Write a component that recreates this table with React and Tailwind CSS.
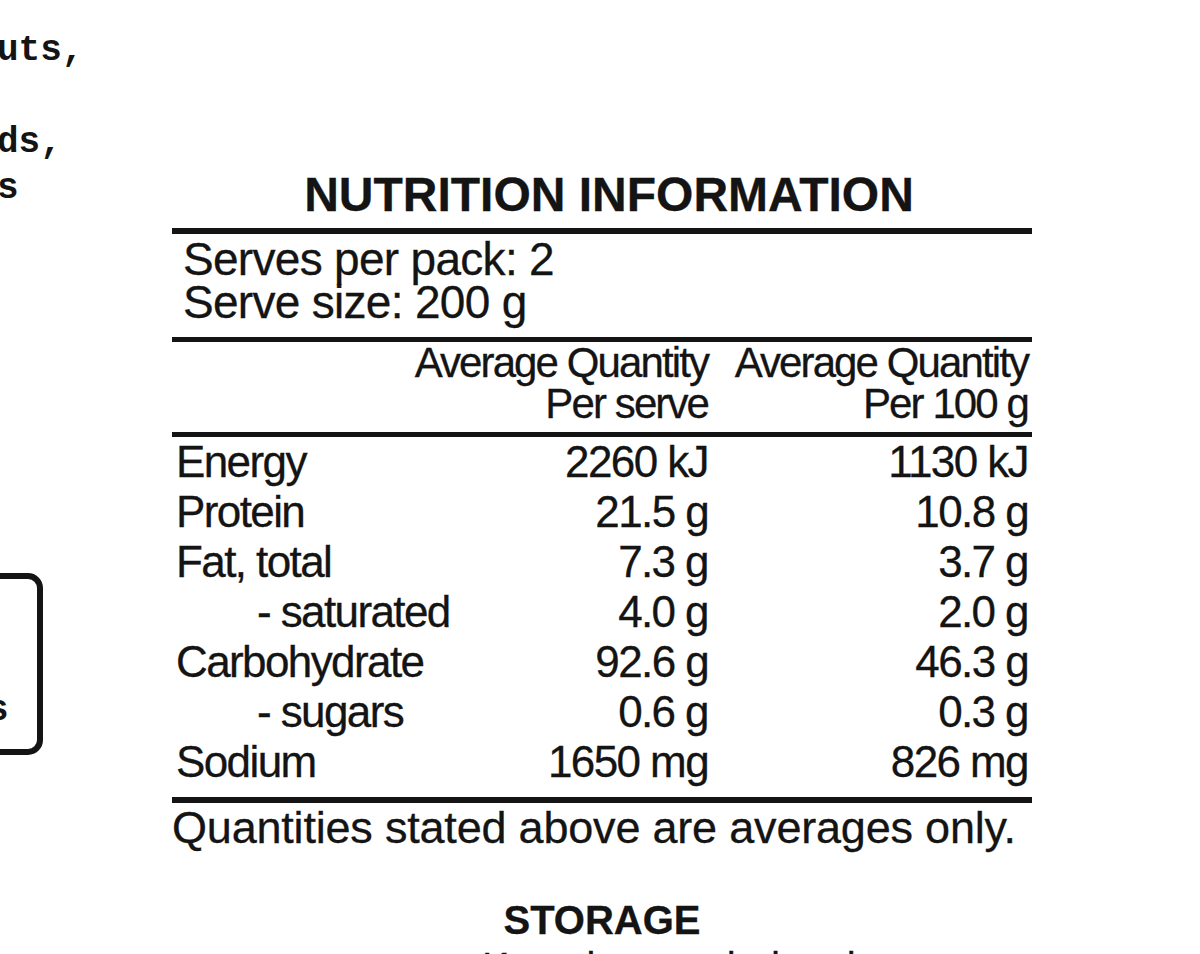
import React from "react";

const rows = [
  { label: "Energy", serve: "2260 kJ", per100: "1130 kJ" },
  { label: "Protein", serve: "21.5 g", per100: "10.8 g" },
  { label: "Fat, total", serve: "7.3 g", per100: "3.7 g" },
  { label: "- saturated", serve: "4.0 g", per100: "2.0 g", sub: true },
  { label: "Carbohydrate", serve: "92.6 g", per100: "46.3 g" },
  { label: "- sugars", serve: "0.6 g", per100: "0.3 g", sub: true },
  { label: "Sodium", serve: "1650 mg", per100: "826 mg" },
];

function Ingredients() {
  return (
    <div className="w-[172px] shrink-0 flex flex-col text-[36px] leading-[46px] font-bold text-[#141414] font-['Liberation_Mono','Courier_New',monospace]">
      <div className="mt-[28px] ml-[-3px] whitespace-pre">
        <div>uts,</div>
        <div>&nbsp;</div>
        <div>ds,</div>
        <div>s</div>
      </div>
      <div className="mt-[361px] ml-[-30px] w-[73px] h-[182px] border-[6px] border-[#141414] rounded-[15px] flex flex-col justify-end pb-[18px] pl-[11px]">
        <span className="leading-[40px]">s</span>
      </div>
    </div>
  );
}

function NutritionPanel() {
  return (
    <div className="w-[860px] shrink-0 flex flex-col text-[#141414] font-['Liberation_Sans',Arial,sans-serif] [-webkit-text-stroke:0.3px_#141414]">
      <h1 className="mt-[171px] pl-[14px] text-center text-[48px] leading-[48px] font-bold whitespace-nowrap">
        NUTRITION INFORMATION
      </h1>
      <div className="mt-[9px] border-t-[6px] border-[#141414]" />
      <div className="pt-[4px] pb-[13px] pl-[11px] text-[46px] leading-[43px] tracking-[-0.7px] whitespace-nowrap">
        <div>Serves per pack: 2</div>
        <div>Serve size: 200 g</div>
      </div>
      <div className="border-t-[5px] border-[#141414]" />
      <div className="grid grid-cols-[260px_272px_320px] px-[4px] pb-[8px] text-[42px] leading-[41px] tracking-[-1.9px] whitespace-nowrap">
        <div />
        <div className="flex flex-col items-end">
          <div>Average Quantity</div>
          <div>Per serve</div>
        </div>
        <div className="flex flex-col items-end">
          <div>Average Quantity</div>
          <div>Per 100 g</div>
        </div>
      </div>
      <div className="border-t-[5px] border-[#141414]" />
      <div className="grid grid-cols-[260px_272px_320px] px-[4px] text-[44px] leading-[50px] tracking-[-1.6px] whitespace-nowrap">
        {rows.map((r) => (
          <React.Fragment key={r.label}>
            <div className={r.sub ? "pl-[81px]" : ""}>{r.label}</div>
            <div className="text-right">{r.serve}</div>
            <div className="text-right">{r.per100}</div>
          </React.Fragment>
        ))}
      </div>
      <div className="mt-[10px] border-t-[6px] border-[#141414]" />
      <div className="pt-[3px] text-[45px] leading-[44px] tracking-[-0.2px] whitespace-nowrap">
        Quantities stated above are averages only.
      </div>
      <h2 className="mt-[50px] text-center text-[40px] leading-[40px] font-bold">STORAGE</h2>
      <div className="mt-[7px] pl-[310px] text-[40px] leading-[40px] whitespace-nowrap">
        Keep in a cool, dry place.
      </div>
    </div>
  );
}

export default function App() {
  return (
    <div className="w-[1200px] h-[954px] overflow-hidden bg-white flex">
      <Ingredients />
      <NutritionPanel />
    </div>
  );
}
